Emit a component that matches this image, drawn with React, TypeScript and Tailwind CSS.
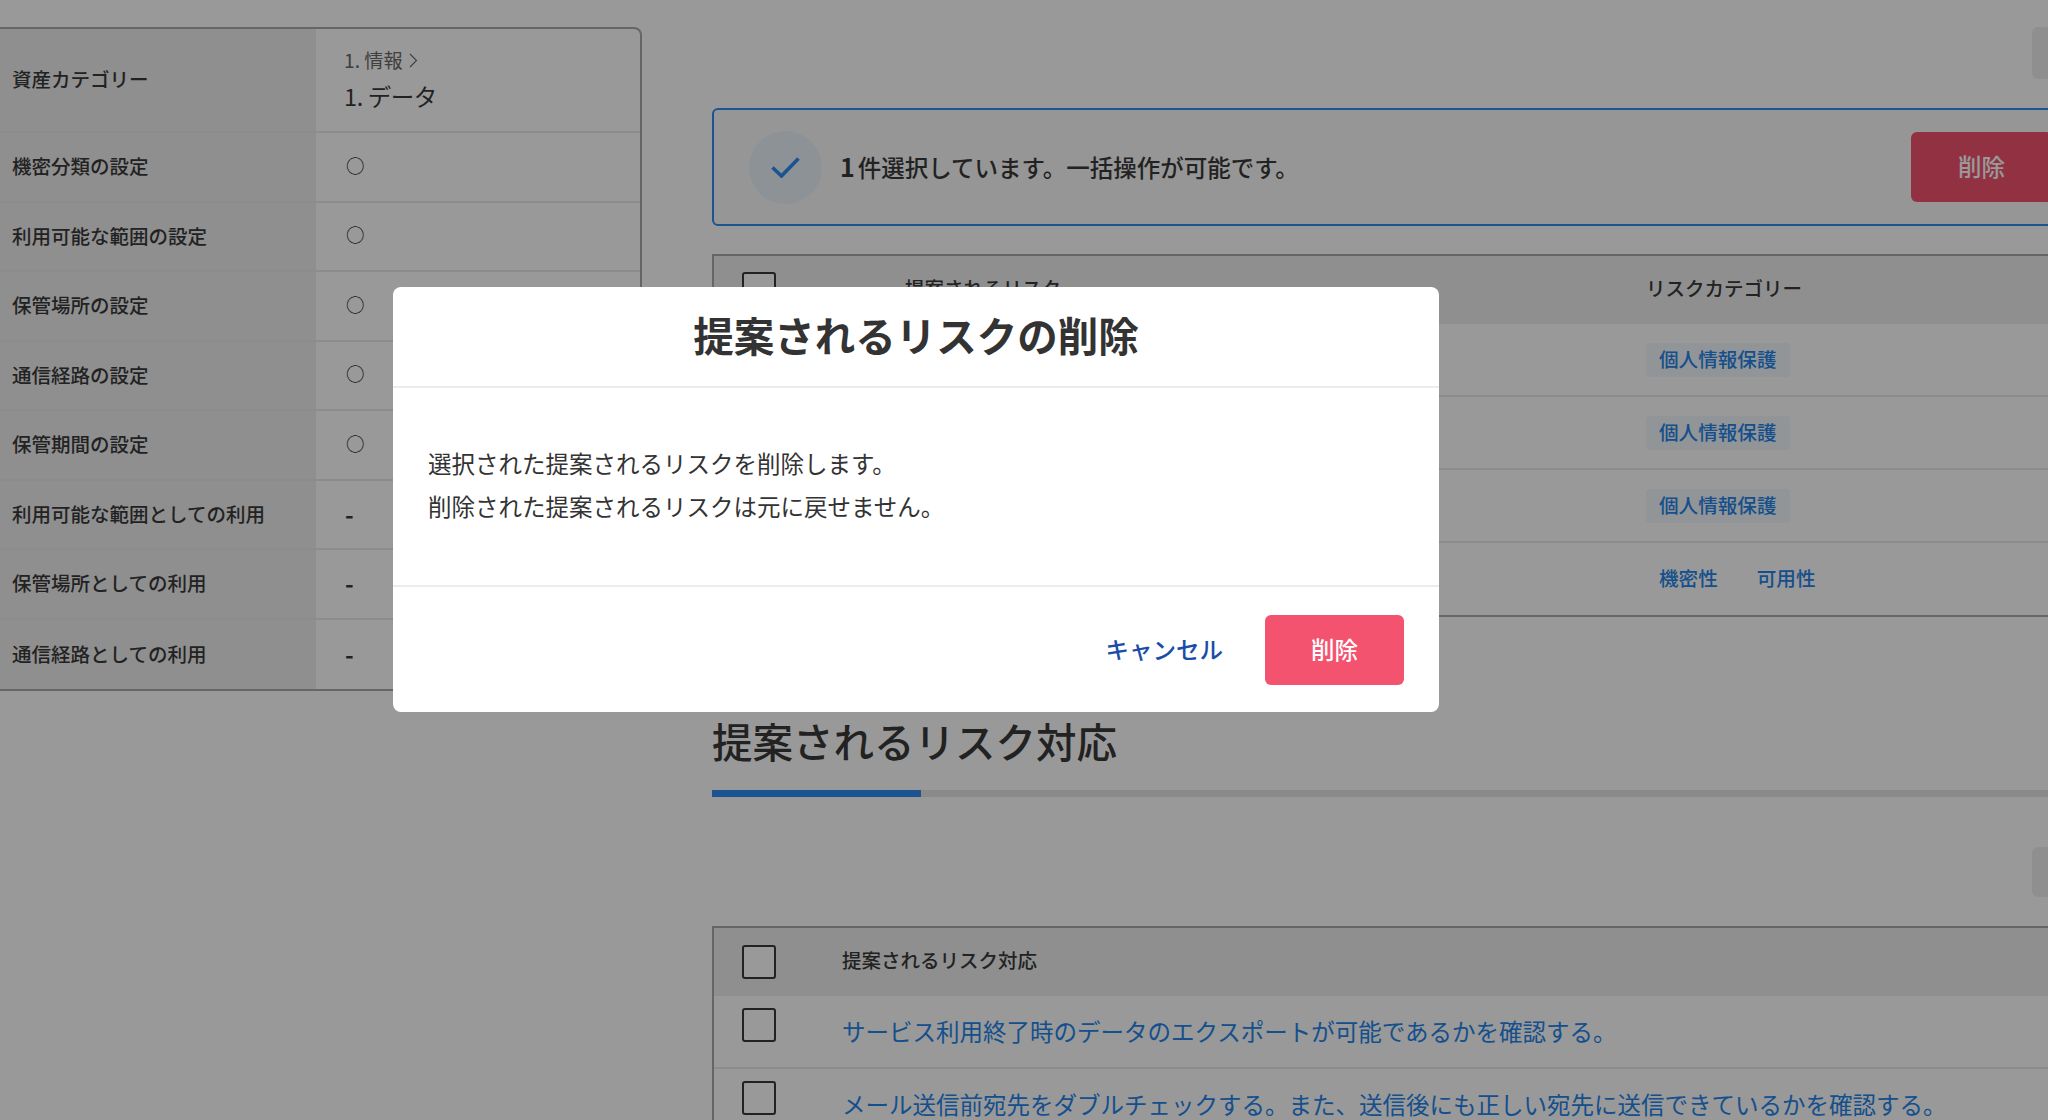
import React from "react";

const leftRows: [string, string][] = [
  ["機密分類の設定", "○"],
  ["利用可能な範囲の設定", "○"],
  ["保管場所の設定", "○"],
  ["通信経路の設定", "○"],
  ["保管期間の設定", "○"],
  ["利用可能な範囲としての利用", "-"],
  ["保管場所としての利用", "-"],
  ["通信経路としての利用", "-"],
];

function Box({ className = "" }: { className?: string }) {
  return <div className={"w-[34px] h-[34px] shrink-0 rounded-[3px] border-2 border-[#3a3a3a] bg-white " + className} />;
}

function Tag({ children }: { children: React.ReactNode }) {
  return (
    <span className="inline-flex h-[34px] items-center rounded-[4px] bg-[#f3f8fc] px-[13px] pb-[1px] text-[19.6px] font-medium text-[#2484ea]">
      {children}
    </span>
  );
}

export default function App() {
  return (
    <div className="relative flex h-[1120px] w-[2048px] overflow-hidden bg-white font-['Noto_Sans_CJK_JP','Noto_Sans',sans-serif] text-[#3a3a3a]">
      {/* left table */}
      <aside className="w-[642px] shrink-0 pt-[27px]">
        <div className="rounded-tr-[8px] border-t-2 border-r-2 border-b-2 border-[#aaaaaa]">
          <div className="flex h-[104px] border-b-2 border-[#e9e9e9]">
            <div className="flex w-[316px] items-center bg-[#eeeeee] pb-[2px] pl-[12px] text-[19.5px] font-medium">資産カテゴリー</div>
            <div className="flex flex-1 flex-col justify-center pb-[1px] pl-[28px]">
              <div className="flex items-center gap-[6px] text-[19.2px] leading-[26px] text-[#6a6a6a]">
                <span>1. 情報</span>
                <svg width="9" height="15" viewBox="0 0 9 15" fill="none" stroke="#6a6a6a" strokeWidth="1.1"><path d="M1 1l6.5 6.5L1 14" /></svg>
              </div>
              <div className="mt-[7px] text-[23.5px] leading-[32px] tracking-[-0.4px]">1. データ</div>
            </div>
          </div>
          {leftRows.map(([label, value], i) => (
            <div key={label} className={"flex h-[69.5px] " + (i < leftRows.length - 1 ? "border-b-2 border-[#e9e9e9]" : "")}>
              <div className="flex w-[316px] items-center bg-[#eeeeee] pb-[2px] pl-[12px] text-[19.5px] font-medium">{label}</div>
              <div className={"flex flex-1 items-center " + (value === "-" ? "pl-[29px] text-[23.5px] font-bold" : "pb-[2px] pl-[30px] text-[18.5px] text-[#2a2a2a]")}>{value}</div>
            </div>
          ))}
        </div>
      </aside>

      {/* right column */}
      <main className="w-[1400px] shrink-0 pl-[70px] pt-[27px]">
        <div className="ml-[1320px] h-[52px] w-[70px] rounded-[6px] bg-[#eeeeee]" />

        <div className="mt-[29px] flex h-[118px] w-[1360px] items-center rounded-[6px] border-2 border-[#2d8cf0] bg-[#fbfbfb] pl-[35px] pr-[18px]">
          <div className="flex h-[73px] w-[73px] shrink-0 items-center justify-center rounded-full bg-[#eaf3fb]">
            <svg width="29" height="21" viewBox="0 0 29 21" fill="none" stroke="#2d8cf0" strokeWidth="3.6"><path d="M1.5 10.5l9 8.5L27.5 1.5" /></svg>
          </div>
          <div className="ml-[18px] flex-1 text-[23.5px] font-medium"><span className="mr-[3px] text-[25px] font-bold">1</span>件選択しています。一括操作が可能です。</div>
          <div className="flex h-[70px] w-[141px] items-center justify-center rounded-[6px] bg-[#f3536f] text-[23.5px] font-medium text-white">削除</div>
        </div>

        <div className="mt-[28px] w-[1400px] border-y-2 border-l-2 border-[#aaaaaa]">
          <div className="flex h-[68px] bg-[#eeeeee]">
            <Box className="ml-[28px] mt-[16px]" />
            <div className="ml-[129px] w-[741px] pt-[17px] text-[19.5px] font-medium">提案されるリスク</div>
            <div className="pt-[17px] text-[19.5px] font-medium">リスクカテゴリー</div>
          </div>
          {[0, 1, 2].map((i) => (
            <div key={i} className="flex h-[73px] items-center border-b-2 border-[#e9e9e9] pl-[932px]">
              <Tag>個人情報保護</Tag>
            </div>
          ))}
          <div className="flex h-[72px] items-center gap-[39px] pb-[2px] pl-[945px] text-[19.6px] font-medium text-[#2484ea]">
            <span>機密性</span>
            <span>可用性</span>
          </div>
        </div>

        <h2 className="mt-[96px] text-[40.5px] font-medium leading-[56px]">提案されるリスク対応</h2>
        <div className="mt-[21px] h-[7px] w-[1400px] bg-[#e6e6e6]">
          <div className="h-full w-[209px] bg-[#2d8cf0]" />
        </div>

        <div className="ml-[1320px] mt-[50px] h-[50px] w-[70px] rounded-[6px] bg-[#eeeeee]" />

        <div className="mt-[29px] w-[1400px] border-t-2 border-l-2 border-[#aaaaaa]">
          <div className="flex h-[68px] items-center bg-[#eeeeee]">
            <Box className="ml-[28px] mb-[1px]" />
            <div className="ml-[66px] pb-[4px] text-[19.5px] font-medium">提案されるリスク対応</div>
          </div>
          <div className="flex h-[73px] border-b-2 border-[#e9e9e9]">
            <Box className="ml-[28px] mt-[12px]" />
            <div className="ml-[66px] pt-[18px] text-[23.5px] text-[#2484ea]">サービス利用終了時のデータのエクスポートが可能であるかを確認する。</div>
          </div>
          <div className="flex h-[73px]">
            <Box className="ml-[28px] mt-[12px]" />
            <div className="ml-[66px] pt-[18px] text-[23.5px] text-[#2484ea]">メール送信前宛先をダブルチェックする。また、送信後にも正しい宛先に送信できているかを確認する。</div>
          </div>
        </div>
      </main>

      {/* backdrop */}
      <div className="absolute inset-0 bg-black/40" />

      {/* dialog */}
      <div className="absolute left-[393px] top-[287px] flex h-[425px] w-[1046px] flex-col rounded-[8px] bg-white">
        <div className="flex h-[101px] shrink-0 items-center justify-center border-b-2 border-[#ececec] pb-[2px] text-[40.5px] font-bold text-[#333333]">提案されるリスクの削除</div>
        <div className="flex h-[199px] shrink-0 flex-col justify-center border-b-2 border-[#ececec] pb-[4px] pl-[35px] text-[23.5px] leading-[43px] text-[#333333]">
          <p>選択された提案されるリスクを削除します。</p>
          <p>削除された提案されるリスクは元に戻せません。</p>
        </div>
        <div className="flex flex-1 items-center justify-end pr-[35px]">
          <span className="mr-[42px] text-[23.5px] font-medium text-[#1a4da8]">キャンセル</span>
          <div className="flex h-[70px] w-[139px] items-center justify-center rounded-[6px] bg-[#f3536f] text-[23.5px] font-medium text-white">削除</div>
        </div>
      </div>
    </div>
  );
}
